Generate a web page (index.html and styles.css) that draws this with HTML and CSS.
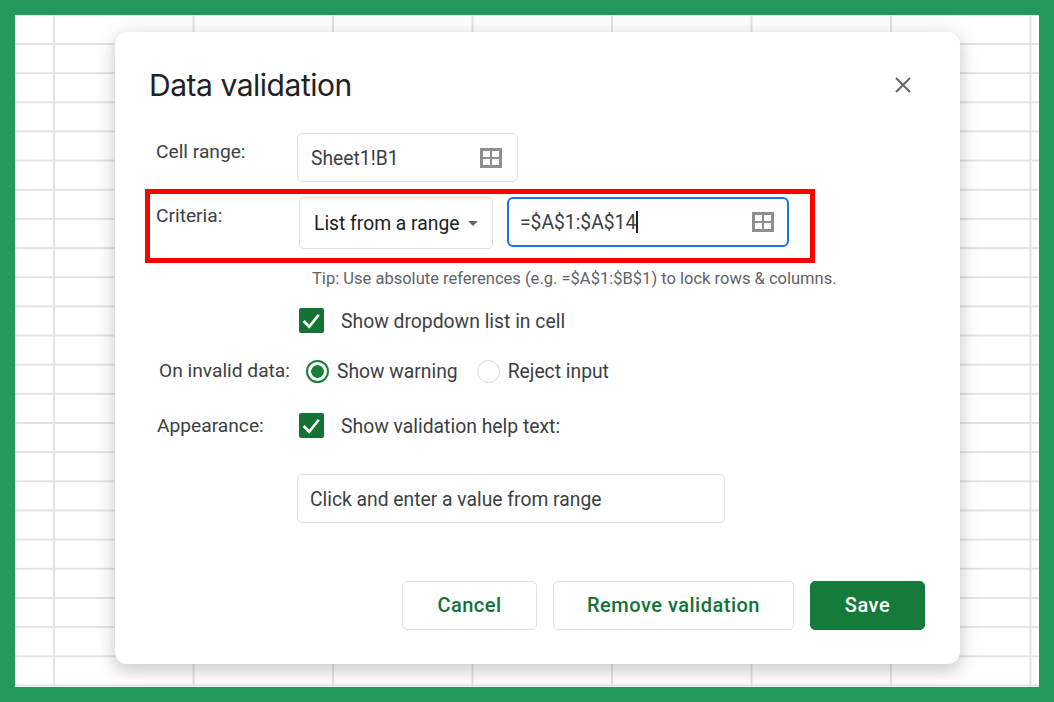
FILE: index.html
```html
<!DOCTYPE html>
<html lang="en">
<head>
<meta charset="utf-8">
<title>Data validation</title>
<link rel="stylesheet" href="styles.css">
</head>
<body>
<div class="frame">
  <div class="sheet">
    <section class="dialog">
      <header class="head">
        <h1 class="title">Data validation</h1>
        <svg class="close" viewBox="0 0 16 16"><path d="M1 1L15 15M15 1L1 15"/></svg>
      </header>
      <div class="row row-range">
        <span class="label label-range">Cell range:</span>
        <div class="field field-range"><span class="range-text">Sheet1!B1</span>
          <svg class="grid-icon" viewBox="0 0 22 20"><path d="M0 0H22V20H0ZM3 3V9H10V3ZM12 3V9H19V3ZM3 11V17H10V11ZM12 11V17H19V11Z" fill-rule="evenodd"/></svg>
        </div>
      </div>
      <div class="criteria">
        <span class="label label-criteria">Criteria:</span>
        <div class="select">List from a range<i class="caret"></i></div>
        <div class="field field-formula"><span class="formula">=$A$1:$A$14<i class="cursor"></i></span>
          <svg class="grid-icon" viewBox="0 0 22 20"><path d="M0 0H22V20H0ZM3 3V9H10V3ZM12 3V9H19V3ZM3 11V17H10V11ZM12 11V17H19V11Z" fill-rule="evenodd"/></svg>
        </div>
      </div>
      <p class="tip">Tip: Use absolute references (e.g. =$A$1:$B$1) to lock rows &amp; columns.</p>
      <div class="row row-dropdown">
        <span class="check"><svg viewBox="0 0 24 24"><path d="M4.5 12.5L9.8 18L19 6.5"/></svg></span>
        <span class="check-text">Show dropdown list in cell</span>
      </div>
      <div class="row row-invalid">
        <span class="label label-invalid">On invalid data:</span>
        <span class="radio radio-on"></span><span class="radio-text">Show warning</span>
        <span class="radio radio-off"></span><span class="radio-text">Reject input</span>
      </div>
      <div class="row row-appearance">
        <span class="label label-appearance">Appearance:</span>
        <span class="check"><svg viewBox="0 0 24 24"><path d="M4.5 12.5L9.8 18L19 6.5"/></svg></span>
        <span class="check-text">Show validation help text:</span>
      </div>
      <div class="row row-help">
        <div class="field field-help">Click and enter a value from range</div>
      </div>
      <footer class="actions">
        <button class="btn btn-cancel">Cancel</button>
        <button class="btn btn-remove">Remove validation</button>
        <button class="btn btn-save">Save</button>
      </footer>
    </section>
  </div>
</div>
</body>
</html>
```
FILE: styles.css
```css
* { box-sizing: border-box; }
html, body { margin: 0; height: 100%; }
body { width: 1054px; height: 702px; overflow: hidden; font-family: Roboto, "Liberation Sans", sans-serif; color: #3c4043; }
.frame { width: 1054px; height: 702px; padding: 15px; background: #23995c; }
.sheet {
  width: 1024px; height: 672px; padding: 17px 79px 0 100px;
  background-color: #fff;
  background-image:
    linear-gradient(to right, #e2e3e3 2px, transparent 2px),
    linear-gradient(to bottom, #e2e3e3 2px, transparent 2px);
  background-size: 139.5px 100%, 100% 29.17px;
  background-position: 38px 0, 0 28px;
}
.dialog {
  width: 845px; height: 632px; background: #fff; border-radius: 12px;
  box-shadow: 0 8px 14px 2px rgba(60,64,67,.16), 0 0 22px rgba(60,64,67,.12);
}
.head { display: flex; align-items: center; justify-content: space-between; height: 101px; padding: 0 49px 0 34px; }
.title { margin: 0 0 -5px; font: 400 30px/40px Inter, "Open Sans", sans-serif; letter-spacing: -.47px; color: #202124; }
.close { width: 16px; height: 16px; margin-bottom: -5px; fill: none; stroke: #666; stroke-width: 2; }
.row { display: flex; align-items: center; }
.label { font-size: 19.2px; line-height: 24px; color: #3c4043; }
.field { display: flex; align-items: center; justify-content: space-between; border: 1px solid #dfe1e5; border-radius: 5px; font-size: 19.3px; color: #3c4043; background: #fff; }
.grid-icon { width: 22px; height: 20px; fill: #8e8e8e; flex: none; }
.row-range { align-items: flex-start; height: 49px; padding-left: 41px; }
.label-range { width: 141px; margin-top: 7px; }
.field-range { width: 221px; height: 49px; padding: 0 15px 0 13px; }
.range-text { margin-top: 2px; }
.criteria { display: flex; align-items: flex-start; width: 670px; height: 74px; margin: 7px 0 0 30px; border: 5px solid #f00; }
.label-criteria { width: 143px; margin: 10px 0 0 6px; }
.select { display: flex; align-items: center; width: 194px; height: 52px; margin-top: 3px; padding-left: 14px; border: 1px solid #dfe1e5; border-radius: 5px; font-size: 19.3px; color: #202124; }
.caret { width: 0; height: 0; margin-left: 9px; border: 5.5px solid transparent; border-top: 5.5px solid #666; border-bottom: 0; }
.field-formula { width: 282px; height: 50px; margin: 3px 0 0 14px; padding: 0 13px 0 11px; border: 2px solid #1a73e8; border-radius: 6px; }
.formula { display: flex; align-items: center; font-size: 19.3px; }
.cursor { width: 1.5px; height: 22px; margin-left: 0; background: #202124; }
.tip { margin: 6px 0 0 197px; font-size: 16.55px; line-height: 20px; color: #5f6368; }
.check { display: flex; align-items: center; justify-content: center; width: 25px; height: 25px; border-radius: 2px; background: #137333; flex: none; }
.check svg { width: 25px; height: 25px; fill: none; stroke: #fff; stroke-width: 2.6; }
.check-text { margin: 2px 0 0 17px; font-size: 19.35px; line-height: 24px; color: #3c4043; }
.row-dropdown { height: 25px; margin-top: 19px; padding-left: 184px; }
.row-invalid { height: 26px; margin-top: 25px; padding-left: 44px; }
.label-invalid { width: 147px; }
.radio { width: 23px; height: 23px; border-radius: 50%; flex: none; }
.radio-on { border: 2px solid #188038; background: radial-gradient(circle, #188038 0 6px, #fff 6.6px); }
.radio-off { margin-left: 19px; border: 1px solid #d5d7d9; background: #fff; }
.radio-text { margin: 2px 0 0 8px; font-size: 19.3px; line-height: 24px; color: #3c4043; }
.row-appearance { height: 25px; margin-top: 29px; padding-left: 42px; }
.label-appearance { width: 142px; }
.row-help { height: 49px; margin-top: 36px; padding-left: 182px; }
.field-help { width: 428px; height: 49px; padding: 2px 0 0 12px; justify-content: flex-start; }
.actions { display: flex; justify-content: flex-end; gap: 16px; margin-top: 58px; padding-right: 35px; }
.btn { height: 49px; border: 1px solid #dfe1e5; border-radius: 5px; background: #fff; color: #137333; font: 500 20px/1 Roboto, sans-serif; letter-spacing: .5px; padding: 0 0 2px; }
.btn-cancel { width: 135px; }
.btn-remove { width: 241px; }
.btn-save { width: 115px; background: #157b3a; border-color: #157b3a; color: #fff; }
```
